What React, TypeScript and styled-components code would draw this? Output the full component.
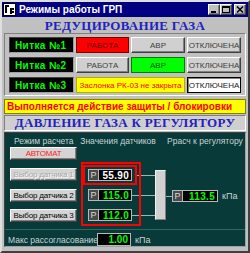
import React from "react";
import styled, { createGlobalStyle, css } from "styled-components";

const Global = createGlobalStyle`
  html, body { margin: 0; padding: 0; background: #c0c0c0; }
  body { font-family: "Liberation Sans", Arial, sans-serif; }
  * { box-sizing: border-box; }
`;

const raised = css`
  border: 1px solid;
  border-color: #ffffff #404040 #404040 #ffffff;
  box-shadow: inset -1px -1px 0 #808080;
`;

const sunken = css`
  border: 1px solid;
  border-color: #808080 #ffffff #ffffff #808080;
`;

const Window = styled.div`
  width: 250px;
  height: 253px;
  background: #c0c0c0;
  border: 2px solid;
  border-color: #dfdfdf #404040 #404040 #dfdfdf;
  display: flex;
  flex-direction: column;
  overflow: hidden;
`;

const TitleBar = styled.div`
  height: 15px;
  background: #000080;
  display: flex;
  align-items: center;
  padding: 0 2px 0 1px;
  gap: 3px;
`;

const TitleText = styled.span`
  color: #fff;
  font-weight: bold;
  font-size: 10px;
  flex: 1;
  white-space: nowrap;
`;

const TitleButtons = styled.div`
  display: flex;
  align-items: center;
`;

const TitleButton = styled.div<{ $gap?: number }>`
  ${raised};
  width: 12px;
  height: 11px;
  background: #c0c0c0;
  margin-left: ${(p) => p.$gap ?? 0}px;
  display: flex;
  align-items: center;
  justify-content: center;
`;

const Header = styled.div<{ $h: number; $mt: number }>`
  height: ${(p) => p.$h}px;
  margin: ${(p) => p.$mt}px 2px 0;
  display: flex;
  align-items: center;
  justify-content: center;
  font-family: "Liberation Serif", "Times New Roman", serif;
  font-weight: bold;
  font-size: 13px;
  letter-spacing: 0.3px;
  color: #2222c0;
  white-space: nowrap;
`;

const BoxedHeader = styled(Header)`
  ${sunken};
  background: #cfcfcf;
`;

const Panel = styled.div`
  ${sunken};
  margin: 0 2px;
  height: 63px;
  padding: 3px 4px 0;
  display: flex;
  flex-direction: column;
  gap: 4px;
`;

const Row = styled.div`
  display: flex;
  gap: 2px;
  height: 16px;
`;

const LineLabel = styled.div`
  width: 65px;
  background: #000;
  border: 1px solid;
  border-color: #404040 #a0a0a0 #a0a0a0 #404040;
  color: #00ff00;
  font-weight: bold;
  font-size: 10px;
  letter-spacing: 0.4px;
  display: flex;
  align-items: center;
  padding-left: 5px;
`;

type Tone = "red" | "green" | "gray" | "white" | "yellow";

const toneStyles: Record<Tone, ReturnType<typeof css>> = {
  red: css`
    background: #ff0000;
    color: #5a0000;
    border: 1px solid #800000;
  `,
  green: css`
    background: #00ff00;
    color: #005000;
    border: 1px solid #008000;
  `,
  gray: css`
    background: #d0d0d0;
    color: #404040;
    ${raised};
  `,
  white: css`
    background: #ffffff;
    color: #202020;
    border: 1px solid #000;
    box-shadow: inset 1px 1px 0 #808080;
  `,
  yellow: css`
    background: #ffff00;
    color: #ff0000;
    border: 1px solid #b0b000;
  `,
};

const StateBox = styled.div<{ $tone: Tone; $w: number }>`
  width: ${(p) => p.$w}px;
  ${(p) => toneStyles[p.$tone]};
  font-size: 8px;
  display: flex;
  align-items: center;
  justify-content: center;
  white-space: nowrap;
`;

const AlarmBar = styled.div`
  margin: 3px 2px 0;
  height: 15px;
  background: #ffff00;
  border: 1px solid #808000;
  color: #ff0000;
  font-weight: bold;
  font-size: 10px;
  display: flex;
  align-items: center;
  padding-left: 2px;
  white-space: nowrap;
`;

const Teal = styled.div`
  margin: 1px 2px 0;
  height: 115px;
  background: #083a3a;
  border: 1px solid;
  border-color: #404040 #a0a0a0 #a0a0a0 #404040;
  display: flex;
  flex-direction: column;
`;

const LabelsRow = styled.div`
  display: flex;
  height: 10px;
  margin-top: 3px;
  font-size: 8.5px;
  color: #c8d4d4;
  white-space: nowrap;
`;

const ColLabel = styled.span<{ $w: number; $pl?: number }>`
  width: ${(p) => p.$w}px;
  padding-left: ${(p) => p.$pl ?? 0}px;
`;

const Diagram = styled.div`
  display: flex;
  align-items: flex-start;
  height: 79px;
  margin-top: 1px;
`;

const ButtonsCol = styled.div`
  margin-left: 5px;
  width: 67px;
  display: flex;
  flex-direction: column;
`;

const PanelButton = styled.div<{ $mt: number; $kind: "red" | "disabled" | "normal" }>`
  ${raised};
  margin-top: ${(p) => p.$mt}px;
  height: 13px;
  background: #d4d4d4;
  font-size: 8px;
  letter-spacing: -0.2px;
  display: flex;
  align-items: center;
  justify-content: center;
  white-space: nowrap;
  overflow: hidden;
  color: ${(p) => (p.$kind === "red" ? "#ff2020" : p.$kind === "disabled" ? "#a8a8a8" : "#000")};
  text-shadow: ${(p) => (p.$kind === "disabled" ? "1px 1px 0 #fff" : "none")};
`;

const RedGroup = styled.div`
  margin: 15px 0 0 4px;
  width: 60px;
  height: 64px;
  border: 2px solid #ff0000;
  padding-top: 1px;
  display: flex;
  flex-direction: column;
`;

const SensorRow = styled.div<{ $mt: number; $pl: number }>`
  display: flex;
  align-items: center;
  margin-top: ${(p) => p.$mt}px;
  padding-left: ${(p) => p.$pl}px;
`;

const SelectedFrame = styled.div`
  border: 2px solid #ff0000;
  padding: 2px 3px;
  display: flex;
`;

const Wire = styled.div<{ $w?: number }>`
  height: 1px;
  background: #9fb4b4;
  ${(p) => (p.$w ? `width: ${p.$w}px;` : "flex: 1;")}
`;

const PBox = styled.div<{ $w: number }>`
  width: ${(p) => p.$w}px;
  height: 12px;
  display: flex;
  border: 1px solid #b8b8b8;
  background: #000;
`;

const PTag = styled.div`
  width: 10px;
  background: #4a4a4a;
  border-right: 1px solid #b8b8b8;
  color: #d8d8d8;
  font-size: 9px;
  display: flex;
  align-items: center;
  justify-content: center;
`;

const PValue = styled.div<{ $white?: boolean }>`
  flex: 1;
  color: ${(p) => (p.$white ? "#ffffff" : "#00ff00")};
  font-size: 10px;
  font-weight: bold;
  display: flex;
  align-items: center;
  justify-content: flex-end;
  padding-right: 2px;
  letter-spacing: 0.3px;
`;

const WireCol = styled.div`
  margin-top: 28px;
  width: 14px;
  display: flex;
  flex-direction: column;
  gap: 19px;
`;

const MuxBar = styled.div`
  margin-top: 23px;
  width: 11px;
  height: 50px;
  background: #d0d0d0;
  border: 1px solid;
  border-color: #f0f0f0 #808080 #808080 #f0f0f0;
`;

const OutRow = styled.div`
  margin-top: 43px;
  display: flex;
  align-items: center;
  height: 12px;
`;

const Unit = styled.span<{ $ml: number }>`
  margin-left: ${(p) => p.$ml}px;
  font-size: 9px;
  color: #c8d4d4;
`;

const Separator = styled.div`
  height: 1px;
  margin-top: 3px;
  background: #2f6868;
`;

const MaxRow = styled.div`
  display: flex;
  align-items: center;
  margin-top: 3px;
  height: 13px;
  padding-left: 3px;
`;

const MaxLabel = styled.span`
  width: 89px;
  font-size: 8.5px;
  color: #c8d4d4;
  white-space: nowrap;
`;

const ValueBox = styled.div`
  width: 34px;
  height: 13px;
  background: #000;
  border: 1px solid #b8b8b8;
  color: #00ff00;
  font-size: 10px;
  font-weight: bold;
  display: flex;
  align-items: center;
  justify-content: flex-end;
  padding-right: 2px;
`;

const AppIcon = () => (
  <svg width="13" height="13" viewBox="0 0 13 13">
    <rect x="0.5" y="0.5" width="12" height="12" fill="#fff" stroke="#000" />
    <rect x="2" y="2" width="4" height="2" fill="#000" />
    <rect x="2" y="2" width="2" height="8" fill="#000" />
    <rect x="7" y="5" width="4" height="2" fill="#000" />
    <rect x="7" y="5" width="2" height="6" fill="#000" />
    <rect x="9" y="8" width="2" height="2" fill="#000" />
  </svg>
);

export default function App() {
  return (
    <>
      <Global />
      <Window>
        <TitleBar>
          <AppIcon />
          <TitleText>Режимы работы ГРП</TitleText>
          <TitleButtons>
            <TitleButton>
              <svg width="8" height="7" viewBox="0 0 8 7">
                <rect x="1" y="5" width="5" height="2" fill="#000" />
              </svg>
            </TitleButton>
            <TitleButton>
              <svg width="8" height="7" viewBox="0 0 8 7">
                <rect x="0.5" y="0.5" width="7" height="6" fill="none" stroke="#000" />
                <rect x="0" y="0" width="8" height="2" fill="#000" />
              </svg>
            </TitleButton>
            <TitleButton $gap={2}>
              <svg width="8" height="7" viewBox="0 0 8 7">
                <path d="M1 0.5 L7 6.5 M7 0.5 L1 6.5" stroke="#000" strokeWidth="1.5" />
              </svg>
            </TitleButton>
          </TitleButtons>
        </TitleBar>

        <Header $h={15} $mt={1}>РЕДУЦИРОВАНИЕ ГАЗА</Header>

        <Panel>
          <Row>
            <LineLabel>Нитка №1</LineLabel>
            <StateBox $tone="red" $w={53}>РАБОТА</StateBox>
            <StateBox $tone="gray" $w={54}>АВР</StateBox>
            <StateBox $tone="gray" $w={54}>ОТКЛЮЧЕНА</StateBox>
          </Row>
          <Row>
            <LineLabel>Нитка №2</LineLabel>
            <StateBox $tone="gray" $w={53}>РАБОТА</StateBox>
            <StateBox $tone="green" $w={54}>АВР</StateBox>
            <StateBox $tone="gray" $w={54}>ОТКЛЮЧЕНА</StateBox>
          </Row>
          <Row>
            <LineLabel>Нитка №3</LineLabel>
            <StateBox $tone="yellow" $w={109}>Заслонка РК-03 не закрыта</StateBox>
            <StateBox $tone="white" $w={54}>ОТКЛЮЧЕНА</StateBox>
          </Row>
        </Panel>

        <AlarmBar>Выполняется действие защиты / блокировки</AlarmBar>

        <BoxedHeader $h={16} $mt={1}>ДАВЛЕНИЕ ГАЗА К РЕГУЛЯТОРУ</BoxedHeader>

        <Teal>
          <LabelsRow>
            <ColLabel $w={77} $pl={9}>Режим расчета</ColLabel>
            <ColLabel $w={89}>Значения датчиков</ColLabel>
            <ColLabel $w={80}>Ррасч к регулятору</ColLabel>
          </LabelsRow>

          <Diagram>
            <ButtonsCol>
              <PanelButton $mt={0} $kind="red">АВТОМАТ</PanelButton>
              <PanelButton $mt={8} $kind="disabled">Выбор датчика 1</PanelButton>
              <PanelButton $mt={8} $kind="normal">Выбор датчика 2</PanelButton>
              <PanelButton $mt={7} $kind="normal">Выбор датчика 3</PanelButton>
            </ButtonsCol>

            <RedGroup>
              <SensorRow $mt={0} $pl={0}>
                <SelectedFrame>
                  <PBox $w={44}>
                    <PTag>P</PTag>
                    <PValue $white>55.90</PValue>
                  </PBox>
                </SelectedFrame>
                <Wire />
              </SensorRow>
              <SensorRow $mt={4} $pl={5}>
                <PBox $w={44}>
                  <PTag>P</PTag>
                  <PValue>115.0</PValue>
                </PBox>
                <Wire />
              </SensorRow>
              <SensorRow $mt={8} $pl={5}>
                <PBox $w={44}>
                  <PTag>P</PTag>
                  <PValue>112.0</PValue>
                </PBox>
                <Wire />
              </SensorRow>
            </RedGroup>

            <WireCol>
              <Wire $w={14} />
              <Wire $w={14} />
              <Wire $w={14} />
            </WireCol>

            <MuxBar />

            <OutRow>
              <Wire $w={6} />
              <PBox $w={46}>
                <PTag>P</PTag>
                <PValue>113.5</PValue>
              </PBox>
              <Unit $ml={4}>кПа</Unit>
            </OutRow>
          </Diagram>

          <Separator />

          <MaxRow>
            <MaxLabel>Макс рассогласование</MaxLabel>
            <ValueBox>1.00</ValueBox>
            <Unit $ml={4}>кПа</Unit>
          </MaxRow>
        </Teal>
      </Window>
    </>
  );
}
